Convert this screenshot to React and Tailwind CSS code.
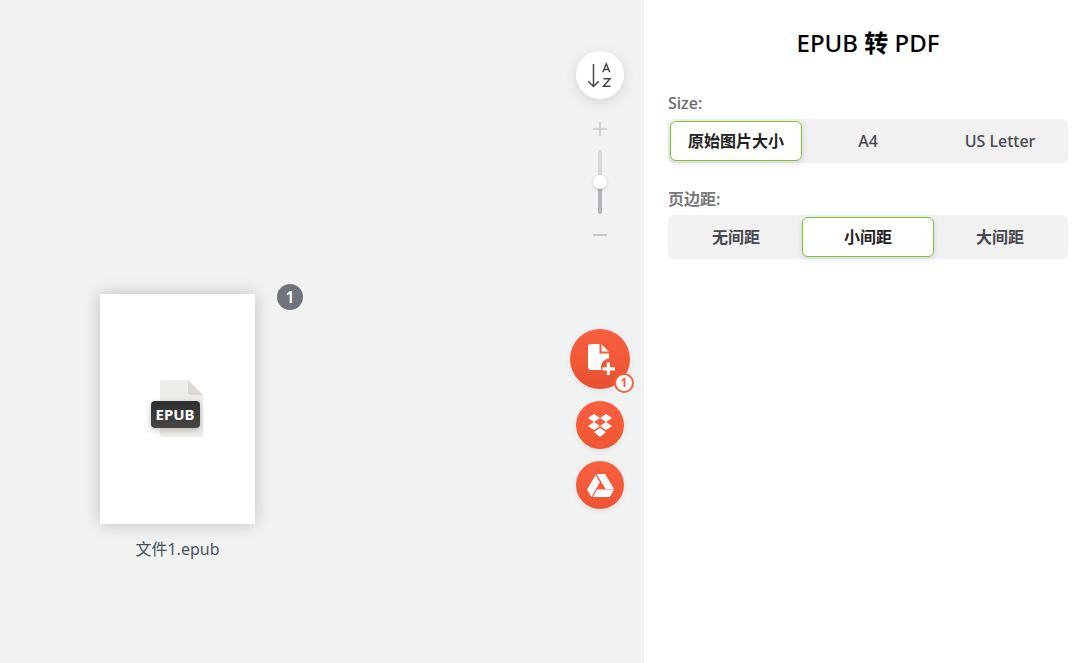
const font = "font-['Noto_Sans','Noto_Sans_CJK_SC',sans-serif]";

function SortIcon() {
  return (
    <svg width="26" height="26" viewBox="0 0 26 26" fill="none" stroke="#44484d" strokeWidth="1.5">
      <path d="M6.5 2V24.5M1.2 19.2L6.5 24.5L11.8 19.2" />
      <path d="M15.8 10.2L19.3 2L22.8 10.2M17 7.6H21.6" />
      <path d="M16.4 16.7H23L16.4 24.3H23.4" />
    </svg>
  );
}

function AddFileIcon() {
  return (
    <svg width="27" height="31" viewBox="0 0 27 31" fill="#fff">
      <path d="M2.5 0H11.5V9.5H21V14.5C16.5 15 13 18.8 13 23C13 24 13.2 25 13.5 26H2.5C1.1 26 0 24.9 0 23.5V2.5C0 1.1 1.1 0 2.5 0Z" />
      <path d="M13.5 0.3L20.7 7.6H13.5V0.3Z" />
      <path d="M18.8 18.5H22V23.2H27V26.4H22V31H18.8V26.4H14.5V23.2H18.8V18.5Z" />
    </svg>
  );
}

function DropboxIcon() {
  return (
    <svg width="24" height="23" viewBox="0 0 24 23" fill="#fff">
      <path d="M6 0L12 4L6 8L0 4L6 0Z" />
      <path d="M18 0L24 4L18 8L12 4L18 0Z" />
      <path d="M0 12L6 8L12 12L6 16L0 12Z" />
      <path d="M18 8L24 12L18 16L12 12L18 8Z" />
      <path d="M6 18L12 14L18 18L12 23L6 18Z" />
    </svg>
  );
}

function DriveIcon() {
  return (
    <svg width="27" height="23" viewBox="0 0 27 23" fill="#fff">
      <path d="M9.6 0H18L27 15H18.6L9.6 0Z" />
      <path d="M8.6 1L12.9 8.2L4.4 23L0 15.5L8.6 1Z" />
      <path d="M10 15.5H27L22.8 23H5.8L10 15.5Z" />
    </svg>
  );
}

function RoundButton({ children }) {
  return (
    <button className="flex h-12 w-12 items-center justify-center rounded-full bg-gradient-to-b from-[#f9603f] to-[#ee5533] shadow-[0_2px_6px_rgba(0,0,0,0.08)]">
      {children}
    </button>
  );
}

function Zoom() {
  return (
    <div className="mt-[23px] flex w-12 flex-col items-center">
      <svg width="14" height="14" viewBox="0 0 14 14" stroke="#c6cacc" strokeWidth="1.6">
        <path d="M7 0V14M0 7H14" />
      </svg>
      <div className="relative mt-[14px] h-[64px] w-1 rounded-sm bg-[#d5d8da]">
        <div className="absolute bottom-0 h-[30px] w-1 rounded-b-sm bg-[#b2b6bb]" />
        <div className="absolute left-[-5px] top-[25px] h-[14px] w-[14px] rounded-full bg-white shadow-[0_1px_3px_rgba(0,0,0,0.2)]" />
      </div>
      <div className="mt-[20px] h-[2px] w-[14px] bg-[#c6cacc]" />
    </div>
  );
}

function Segmented({ options, active, idleWeight }) {
  return (
    <div className="grid h-11 grid-cols-3 rounded-md bg-[#f1f1f1] p-0.5">
      {options.map((o) => (
        <button
          key={o}
          className={
            o === active
              ? "rounded-md border border-[#7dc62f] bg-white text-base font-semibold text-[#222] shadow-[0_2px_6px_rgba(0,0,0,0.14)]"
              : `text-base text-[#47474f] ${idleWeight}`
          }
        >
          {o}
        </button>
      ))}
    </div>
  );
}

export default function App() {
  return (
    <div className={`flex h-[663px] w-[1081px] overflow-hidden bg-white ${font}`}>
      <main className="relative h-full w-[644px] bg-[#f1f3f3] pl-[100px] pt-[294px]">
        <div className="relative w-[155px]">
          <div className="flex h-[230px] w-[155px] items-center justify-center bg-white shadow-[0_0_16px_rgba(0,0,0,0.22)]">
            <div className="relative ml-[1px] mt-[-1px] h-[57px] w-[43px] translate-x-[3px] rounded-[2px] bg-[#efedea]">
              <div className="absolute right-0 top-0 h-[15px] w-[15px] bg-white" />
              <svg className="absolute right-0 top-0" width="15" height="15" viewBox="0 0 15 15">
                <path d="M0 0L15 15H2C0.9 15 0 14.1 0 13Z" fill="#dcd9d5" />
              </svg>
              <div className="absolute left-[-9px] top-[21px] flex h-[27px] w-[49px] items-center justify-center rounded-[4px] bg-gradient-to-b from-[#2f2f2f] to-[#474645] text-[15px] font-bold leading-none text-white shadow-[0_2px_6px_rgba(0,0,0,0.25)]">
                EPUB
              </div>
            </div>
          </div>
          <div className="mt-[14px] text-center text-base leading-[22px] text-[#47525e]">文件1.epub</div>
          <div className="absolute left-[177px] top-[-10px] flex h-[26px] w-[26px] items-center justify-center rounded-full bg-[#6f747c] text-base font-semibold text-white">
            1
          </div>
        </div>

        {/* floating tools */}
        <div className="absolute left-[576px] top-[51px]">
          <button className="flex h-12 w-12 items-center justify-center rounded-full bg-white shadow-[0_3px_14px_rgba(0,0,0,0.12)]">
            <SortIcon />
          </button>
          <Zoom />
        </div>

        <div className="absolute left-[570px] top-[329px] flex w-[60px] flex-col items-center gap-3">
          <button className="relative flex h-[60px] w-[60px] items-center justify-center rounded-full bg-gradient-to-b from-[#f9603f] to-[#e8512f] shadow-[0_2px_6px_rgba(0,0,0,0.08)]">
            <span className="ml-[3px]">
              <AddFileIcon />
            </span>
            <span className="absolute left-[44px] top-[44px] flex h-5 w-5 items-center justify-center rounded-full border-2 border-[#f2613f] bg-white text-xs font-bold leading-none text-[#f2613f]">
              1
            </span>
          </button>
          <RoundButton>
            <DropboxIcon />
          </RoundButton>
          <RoundButton>
            <DriveIcon />
          </RoundButton>
        </div>
      </main>

      <aside className="h-full w-[437px] pl-6 pr-[13px]">
        <h1 className="mt-[27px] text-center text-2xl font-medium leading-8 text-black">
          EPUB <span className="font-bold">转</span> PDF
        </h1>
        <div className="mt-8 text-base font-medium leading-6 text-[#66666c]">Size:</div>
        <div className="mt-1">
          <Segmented options={["原始图片大小", "A4", "US Letter"]} active="原始图片大小" idleWeight="font-medium" />
        </div>
        <div className="mt-6 text-base font-semibold leading-6 text-[#77777c]">页边距:</div>
        <div className="mt-1">
          <Segmented options={["无间距", "小间距", "大间距"]} active="小间距" idleWeight="font-semibold" />
        </div>
      </aside>
    </div>
  );
}
